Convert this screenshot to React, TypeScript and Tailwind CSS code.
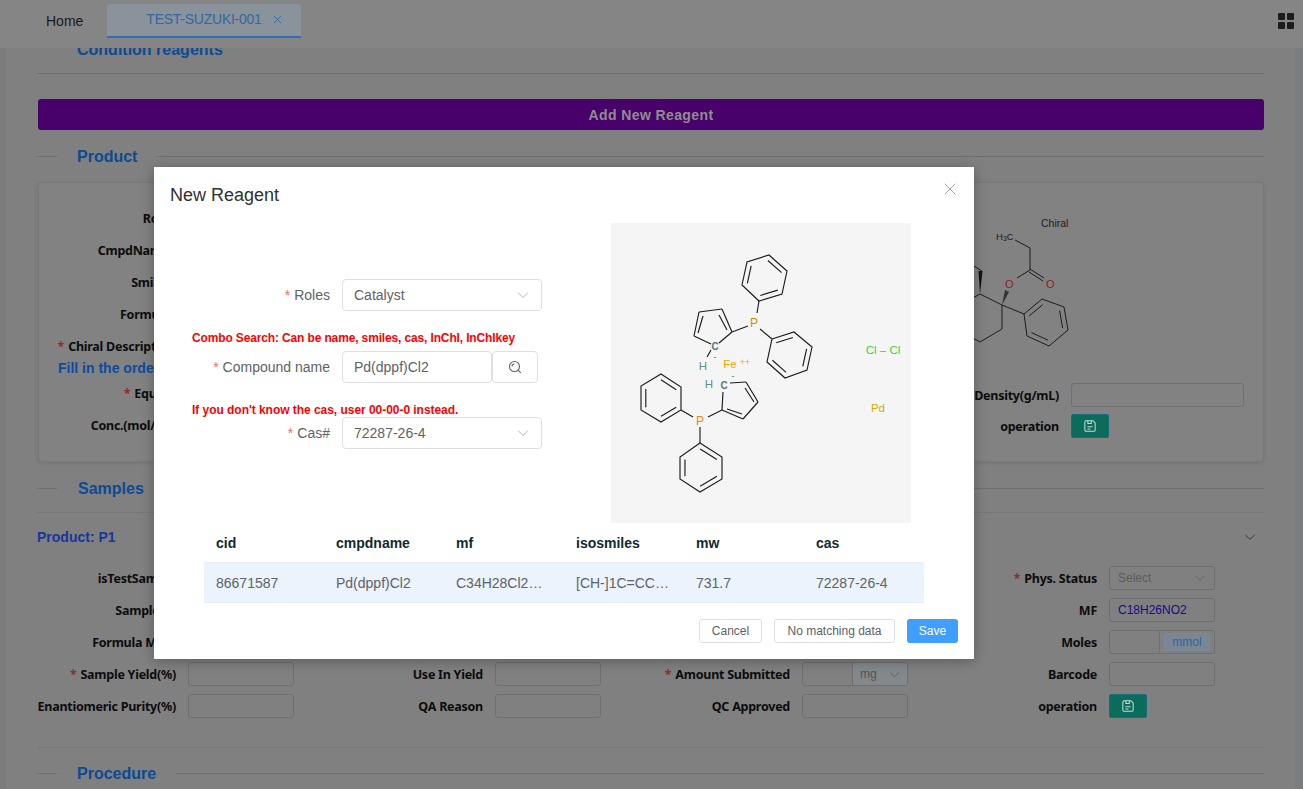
import type { ReactNode } from "react";

type Pt = [number, number];

const ARIAL = "font-['Liberation_Sans',Arial,sans-serif]";
const LABEL = "font-['Noto_Sans',sans-serif] text-[12.5px] tracking-[-0.25px] font-bold text-[#0c0c0c] whitespace-nowrap pt-[2px]";

function Chevron({ className }: { className: string }) {
  return (
    <svg viewBox="0 0 12 12" className={className} fill="none" stroke="currentColor" strokeWidth="1">
      <path d="M1.2 3.8 6 8.4l4.8-4.6" />
    </svg>
  );
}

function SaveIcon() {
  return (
    <svg viewBox="0 0 14 14" className="w-[12px] h-[12px] text-[#c6dcd6]" fill="none" stroke="currentColor" strokeWidth="1.2">
      <path d="M2.5 1h8L13 3.5V12a1 1 0 0 1-1 1H2a1 1 0 0 1-1-1V2.500A1.500 1.500 0 0 1 2.500 1Z" />
      <path d="M4.500 1v3h4V1M4 8h6M4 10.500h3.500" />
    </svg>
  );
}

// benzene style ring, doubles = index of the edges that get an inner line
function Ring({ pts, doubles }: { pts: Pt[]; doubles: number[] }) {
  const cx = pts.reduce((s, p) => s + p[0], 0) / pts.length;
  const cy = pts.reduce((s, p) => s + p[1], 0) / pts.length;
  const inner = (p: Pt): Pt => [cx + (p[0] - cx) * 0.76, cy + (p[1] - cy) * 0.76];
  return (
    <g>
      <polygon points={pts.map((p) => p.join(",")).join(" ")} />
      {doubles.map((i) => {
        const a = inner(pts[i]);
        const b = inner(pts[(i + 1) % pts.length]);
        return <line key={i} x1={a[0]} y1={a[1]} x2={b[0]} y2={b[1]} />;
      })}
    </g>
  );
}

function Catalyst() {
  const bonds: [number, number, number, number][] = [
    [148, 78, 146, 90],
    [121, 109, 137, 103],
    [149, 106, 161, 116],
    [121, 109, 108, 120],
    [83, 113, 100, 121],
    [70, 187, 82, 194],
    [97, 194, 111, 187],
    [89, 204, 89, 220],
    [112, 169, 111, 187],
    [119, 160, 135, 159],
    [96, 134, 100, 127],
    [111, 187, 132, 196],
    [132, 196, 147, 179],
    [147, 179, 135, 159],
    [83, 113, 88, 89],
    [88, 89, 111, 86],
    [111, 86, 121, 109],
  ];
  return (
    <svg viewBox="0 0 300 300" className="w-[300px] h-[300px] bg-[#f5f5f5] shrink-0">
      <g fill="none" stroke="#1c1c1c" strokeWidth="1.15">
        <Ring pts={[[158, 32], [176, 48], [171, 71], [148, 78], [131, 62], [136, 39]]} doubles={[0, 2, 4]} />
        <Ring pts={[[161, 116], [183, 109], [201, 124], [196, 147], [174, 155], [156, 139]]} doubles={[0, 2, 4]} />
        <Ring pts={[[50, 151], [70, 164], [70, 187], [50, 199], [30, 187], [30, 163]]} doubles={[0, 2, 4]} />
        <Ring pts={[[89, 220], [111, 234], [111, 256], [89, 269], [69, 256], [69, 234]]} doubles={[0, 2, 4]} />
        {bonds.map((b, i) => (
          <line key={i} x1={b[0]} y1={b[1]} x2={b[2]} y2={b[3]} />
        ))}
        <line x1="92" y1="93" x2="87" y2="110" />
        <line x1="108" y1="92" x2="116" y2="107" />
        <line x1="116" y1="186" x2="131" y2="191" />
        <line x1="134" y1="165" x2="143" y2="179" />
      </g>
      <g fontSize="11.5" textAnchor="middle" fontFamily="'Liberation Sans', Arial, sans-serif">
        <text x="143" y="104" fill="#df8a00" fontSize="12">P</text>
        <text x="89" y="202" fill="#df8a00" fontSize="12">P</text>
        <text x="104" y="127" fill="#54787a" fontWeight="bold" fontSize="10">C</text>
        <text x="113" y="166" fill="#54787a" fontWeight="bold" fontSize="10">C</text>
        <text x="104" y="137" fill="#54787a" fontSize="9">-</text>
        <text x="122" y="156" fill="#54787a" fontSize="9">-</text>
        <text x="92" y="147" fill="#5f8f8f">H</text>
        <text x="98" y="165" fill="#5f8f8f">H</text>
        <text x="119" y="145" fill="#ffa000">Fe</text>
        <text x="134" y="142" fill="#ffa000" fontSize="9">++</text>
        <text x="272" y="131" fill="#2fd83f">Cl – Cl</text>
        <text x="267" y="189" fill="#d4ac00">Pd</text>
      </g>
    </svg>
  );
}

// the product picture sits behind the dialog, only its right part shows
function ProductStructure() {
  return (
    <svg viewBox="960 215 120 140" className="w-[120px] h-[140px] block">
      <g fill="none" stroke="#1c1c1c" strokeWidth="1">
        <path d="M1015 239 1030 247V269L1017 277" />
        <path d="M1030 268 1044 277M1029 271 1043 280" />
        <path d="M1002 304 1024 313M1002 304V328L980 341 962 331M1002 304 980 293 962 303" />
        <path d="M974 265 982 270" />
        <Ring pts={[[1024, 313], [1042, 298], [1064, 306], [1068, 329], [1049, 345], [1027, 335]]} doubles={[0, 2, 4]} />
      </g>
      <path d="M980 293 978.500 270 982.500 270Z" fill="#111" />
      <path d="M1002 304 1005 289 1009 291Z" fill="#333" />
      <g fontSize="10.5" fontFamily="'Liberation Sans', Arial, sans-serif">
        <text x="1041" y="226" fill="#202020">Chiral</text>
        <text x="996" y="239" fill="#202020" fontSize="9.500">
          H<tspan fontSize="7" dy="1">3</tspan>
          <tspan dy="-1">C</tspan>
        </text>
        <text x="1005" y="287" fill="#8c1f1f" fontSize="11">O</text>
        <text x="1046" y="287" fill="#8c1f1f" fontSize="11">O</text>
      </g>
    </svg>
  );
}

function Divider({ title, shifted }: { title: string; shifted?: boolean }) {
  return (
    <div className="flex items-center h-[24px]">
      <div className="w-[20px] h-px bg-[#6f6f6f]" />
      <div className={`${shifted ? "pl-[21px]" : "pl-[20px]"} pr-[20px] pt-[1px] text-[16px] font-bold text-[#0c4a94] ${ARIAL}`}>{title}</div>
      <div className="flex-1 h-px bg-[#6f6f6f]" />
    </div>
  );
}

function Field({ label, required, w = "w-[139px]", children }: { label?: string; required?: boolean; w?: string; children?: ReactNode }) {
  return (
    <div className="flex items-center h-[24px]">
      <div className={`${w} flex justify-end ${LABEL}`}>
        {required && <span className="text-[#8c2f2f] mr-[4px]">*</span>}
        {label}
      </div>
      <div className="ml-[12px] flex-1">{children}</div>
    </div>
  );
}

function Box({ children, className = "" }: { children?: ReactNode; className?: string }) {
  return (
    <div className={`h-[24px] w-full flex items-center border border-[#6f6f6f] rounded-[3px] overflow-hidden ${className}`}>{children}</div>
  );
}

function SaveButton() {
  return (
    <button type="button" className="w-[38px] h-[24px] flex items-center justify-center rounded-[2px] bg-[#0b6c5b] border border-[#1a6a80]">
      <SaveIcon />
    </button>
  );
}

function SamplesGrid() {
  return (
    <div className={`grid grid-cols-4 gap-x-[50px] gap-y-[8px] mt-[17px] w-[1178px] ${ARIAL}`}>
      <Field label="isTestSample" />
      <div />
      <div />
      <Field label="Phys. Status" required>
        <Box className="px-[8px] justify-between text-[12px] text-[#5c5c5c]">
          Select
          <Chevron className="w-[12px] h-[12px] text-[#626262]" />
        </Box>
      </Field>

      <Field label="Sample ID" />
      <div />
      <div />
      <Field label="MF">
        <Box className="px-[8px] text-[12px] text-[#1a0a86]">C18H26NO2</Box>
      </Field>

      <Field label="Formula Mass" />
      <div />
      <div />
      <Field label="Moles">
        <Box>
          <div className="w-[50px] h-full border-r border-[#6f6f6f]" />
          <div className="flex-1 h-full flex items-center justify-center px-[4px]">
            <div className="w-full h-[18px] bg-[#7a8692] border border-[#788a9c] rounded-[2px] text-[12px] text-[#2f66a8] flex items-center justify-center">mmol</div>
          </div>
        </Box>
      </Field>

      <Field label="Sample Yield(%)" required>
        <Box />
      </Field>
      <Field label="Use In Yield">
        <Box />
      </Field>
      <Field label="Amount Submitted" required>
        <Box>
          <div className="w-[50px] h-full border-r border-[#6f6f6f]" />
          <div className="flex-1 h-full bg-[#83888c] flex items-center justify-between px-[7px] text-[12px] text-[#555]">
            mg
            <Chevron className="w-[11px] h-[11px] text-[#5f5f5f]" />
          </div>
        </Box>
      </Field>
      <Field label="Barcode">
        <Box />
      </Field>

      <Field label="Enantiomeric Purity(%)">
        <Box />
      </Field>
      <Field label="QA Reason">
        <Box />
      </Field>
      <Field label="QC Approved">
        <Box />
      </Field>
      <Field label="operation">
        <SaveButton />
      </Field>
    </div>
  );
}

function ProductCard() {
  return (
    <div className="mt-[14px] ml-px h-[280px] flex justify-between pr-[19px] pt-[23px] pb-[24px] rounded-[4px] border border-[#787878] bg-[#828282] shadow-[0_1px_4px_rgba(0,0,0,0.12)]">
      <div className="w-[300px] flex flex-col">
        <div className="flex flex-col gap-[8px]">
          <Field label="Roles" w="w-[136px]" />
          <Field label="CmpdName" w="w-[130px]" />
          <Field label="Smiles" w="w-[131px]" />
          <Field label="Formula" w="w-[131px]" />
          <Field label="Chiral Description" required w="w-[136px]" />
        </div>
        <div className={`h-[24px] pl-[19px] flex items-center text-[14px] font-bold text-[#0e4ba0] whitespace-nowrap ${ARIAL}`}>Fill in the order</div>
        <div className="mt-[2px] flex flex-col gap-[8px]">
          <Field label="Equiv" required w="w-[128px]" />
          <Field label="Conc.(mol/L)" w="w-[127px]" />
        </div>
      </div>
      <div className="w-[284px] mt-[10px]">
        <ProductStructure />
        <div className="mt-[27px] flex flex-col gap-[7px]">
          <Field label="Density(g/mL)" w="w-[99px]">
            <Box />
          </Field>
          <Field label="operation" w="w-[99px]">
            <SaveButton />
          </Field>
        </div>
      </div>
    </div>
  );
}

function SelectBox({ value }: { value: string }) {
  return (
    <div className="w-[200px] h-[32px] flex items-center justify-between pl-[11px] pr-[12px] border border-[#dcdfe6] rounded-[4px] text-[14px] text-[#606266]">
      {value}
      <Chevron className="w-[12px] h-[12px] text-[#b4b7bd]" />
    </div>
  );
}

function DialogRow({ label, children }: { label: string; children: ReactNode }) {
  return (
    <div className="flex items-center">
      <div className="w-[176px] pr-0 text-right text-[14px] text-[#606266]">
        <span className="text-[#f56c6c] mr-[4px]">*</span>
        {label}
      </div>
      <div className="ml-[12px] flex">{children}</div>
    </div>
  );
}

function ReagentDialog() {
  const cols = ["cid", "cmpdname", "mf", "isosmiles", "mw", "cas"];
  const row = ["86671587", "Pd(dppf)Cl2", "C34H28Cl2FeP2Pd", "[CH-]1C=CC=C1P(C2=CC=CC=C2)", "731.7", "72287-26-4"];
  return (
    <div className={`absolute left-[154px] top-[167px] w-[820px] h-[492px] bg-white flex flex-col shadow-[0_2px_12px_rgba(0,0,0,0.3)] ${ARIAL}`}>
      <div className="h-[56px] pl-[16px] pr-[16px] flex items-center justify-between shrink-0">
        <span className="text-[18px] text-[#303133]">New Reagent</span>
        <svg viewBox="0 0 12 12" className="w-[12px] h-[12px] -mt-[12px] mr-[2px] text-[#9a9da3]" fill="none" stroke="currentColor" strokeWidth="0.9">
          <path d="M.7.7l10.600 10.600M11.300.7.7 11.300" />
        </svg>
      </div>

      <div className="flex h-[300px] shrink-0">
        <div className="w-[457px] pt-[56px]">
          <DialogRow label="Roles">
            <SelectBox value="Catalyst" />
          </DialogRow>
          <div className="mt-[20px] h-[14px] pl-[38px] text-[12px] leading-[14px] tracking-[-0.14px] font-bold text-[#ff0000]">Combo Search: Can be name, smiles, cas, InChI, InChIkey</div>
          <div className="mt-[6px]">
            <DialogRow label="Compound name">
              <div className="w-[150px] h-[32px] flex items-center px-[11px] border border-[#dcdfe6] rounded-[4px] text-[14px] text-[#606266]">Pd(dppf)Cl2</div>
              <button type="button" className="w-[46px] h-[32px] flex items-center justify-center border border-[#dcdfe6] rounded-[4px]">
                <svg viewBox="0 0 14 14" className="w-[14px] h-[14px] text-[#606266]" fill="none" stroke="currentColor" strokeWidth="1.1">
                  <circle cx="6.500" cy="6.500" r="5" />
                  <path d="M10.200 10.200 12.800 12.800M4 6.500A2.500 2.500 0 0 1 6.500 4" />
                </svg>
              </button>
            </DialogRow>
          </div>
          <div className="mt-[20px] h-[14px] pl-[38px] text-[12px] leading-[14px] tracking-[-0.04px] font-bold text-[#ff0000]">If you don't know the cas, user 00-00-0 instead.</div>
          <DialogRow label="Cas#">
            <SelectBox value="72287-26-4" />
          </DialogRow>
        </div>
        <Catalyst />
      </div>

      <div className="mx-[50px] w-[720px] shrink-0">
        <div className="grid grid-cols-6 h-[40px] items-center border-b border-[#ebeef5]">
          {cols.map((c) => (
            <div key={c} className="px-[12px] pt-[2px] text-[14px] font-bold text-[#0f2a30]">
              {c}
            </div>
          ))}
        </div>
        <div className="grid grid-cols-6 h-[40px] items-center bg-[#ebf3fd] border-b border-[#e6edf6]">
          {row.map((c, i) => (
            <div key={c} className={`pl-[12px] pt-[1px] text-[14px] text-[#606266] truncate ${i === 2 ? "pr-[20px]" : "pr-[12px]"}`}>
              {c}
            </div>
          ))}
        </div>
      </div>

      <div className="mt-[16px] pr-[16px] flex justify-end gap-[12px] text-[12px]">
        <button type="button" className="w-[63px] h-[24px] border border-[#dcdfe6] rounded-[3px] text-[#606266]">Cancel</button>
        <button type="button" className="w-[121px] h-[24px] border border-[#dcdfe6] rounded-[3px] text-[#606266]">No matching data</button>
        <button type="button" className="w-[51px] h-[24px] bg-[#409eff] rounded-[3px] text-white">Save</button>
      </div>
    </div>
  );
}

export default function App() {
  return (
    <div className={`relative w-[1303px] h-[789px] overflow-hidden flex flex-col bg-[#7b7c7e] ${ARIAL}`}>
      <header className="h-[48px] shrink-0 bg-[#858585] flex items-start relative z-10">
        <div className="ml-[46px] mt-[13px] text-[14px] leading-[16px] text-[#191919]">Home</div>
        <div className="ml-[24px] mt-[4px] w-[194px] h-[34px] flex items-center pl-[39px] pb-[1px] bg-[#8a929c] border-b-2 border-[#2f6db5] rounded-t-[3px] text-[14px] tracking-[-0.25px] text-[#35689f]">
          TEST-SUZUKI-001
          <svg viewBox="0 0 10 10" className="ml-[11px] w-[9px] h-[9px] text-[#35689f]" fill="none" stroke="currentColor" strokeWidth="1">
            <path d="M1 1l8 8M9 1 1 9" />
          </svg>
        </div>
        <svg viewBox="0 0 16 16" className="absolute left-[1278px] top-[13px] w-[16px] h-[16px] text-[#1c1c1c]" fill="currentColor">
          <rect x="0" y="0" width="7" height="7" rx="1" />
          <rect x="9" y="0" width="7" height="7" rx="1" />
          <rect x="0" y="9" width="7" height="7" rx="1" />
          <rect x="9" y="9" width="7" height="7" rx="1" />
        </svg>
      </header>

      <main className="flex-1 overflow-hidden mx-[7px] mr-[8px] bg-[#808080] pl-[30px] pr-[31px]">
        <div className="-mt-[10px]">
          <div className="h-[36px] border-b border-[#6f6f6f]">
            <div className="pl-[40px] h-[23px] leading-[23px] text-[16px] font-bold text-[#0c4a94]">Condition reagents</div>
          </div>
          <button type="button" className="mt-[25px] ml-px w-[1226px] h-[31px] block pt-[1px] rounded-[3px] bg-[#48006a] text-[14px] tracking-[0.4px] font-bold text-[#8e8e8e]">
            Add New Reagent
          </button>
          <div className="mt-[14px]">
            <Divider title="Product" />
          </div>
          <ProductCard />
          <div className="mt-[14px]">
            <Divider title="Samples" shifted />
          </div>
          <div className="mt-[12px] h-px bg-[#777]" />
          <div className="mt-[12px] h-[24px] pr-[8px] flex items-center justify-between">
            <span className="text-[14px] font-bold text-[#16389a]">Product: P1</span>
            <Chevron className="w-[12px] h-[12px] text-[#3a3a3a]" />
          </div>
          <SamplesGrid />
          <div className="mt-[29px] h-px bg-[#777]" />
          <div className="mt-[13px]">
            <Divider title="Procedure" />
          </div>
        </div>
      </main>

      <ReagentDialog />
    </div>
  );
}
